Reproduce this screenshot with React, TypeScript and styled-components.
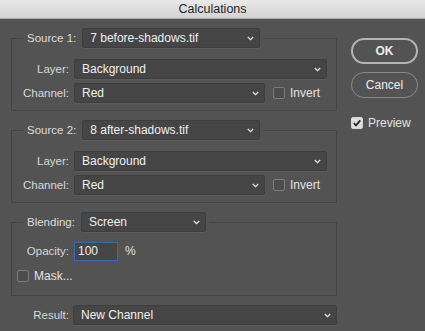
import React from "react";
import styled, { createGlobalStyle } from "styled-components";

const Global = createGlobalStyle`
  html, body { margin: 0; padding: 0; background: #535353; overflow: hidden; }
  * { box-sizing: border-box; }
`;

const Window = styled.div`
  width: 425px;
  height: 331px;
  background: #535353;
  font-family: "Liberation Sans", Arial, sans-serif;
  font-size: 11.5px;
  color: #dcdcdc;
  display: flex;
  flex-direction: column;
`;

const TitleBar = styled.div`
  height: 19px;
  flex: none;
  background: linear-gradient(#e9e9e9, #d3d3d3);
  border-bottom: 1px solid #a8a8a8;
  color: #262626;
  font-size: 12.5px;
  display: flex;
  align-items: center;
  justify-content: center;
`;

const Body = styled.div`
  display: flex;
  gap: 14px;
  padding: 9px 7px 0 11px;
`;

const Main = styled.div`
  width: 326px;
  display: flex;
  flex-direction: column;
`;

const Group = styled.fieldset<{ $pt?: number; $pb?: number }>`
  margin: 0 0 9px 0;
  padding: ${(p) => p.$pt ?? 11}px 0 ${(p) => p.$pb ?? 7}px 0;
  border: 1px solid #444444;
  min-inline-size: 0;
  display: flex;
  flex-direction: column;
  gap: 4px;
`;

const Legend = styled.legend`
  margin-left: 12px;
  padding: 0 3px;
  height: 20px;
`;

const LegendInner = styled.span`
  display: inline-flex;
  align-items: center;
  gap: 6px;
  height: 20px;
`;

const Row = styled.div`
  display: flex;
  align-items: center;
  height: 20px;
`;

const Label = styled.span<{ $w?: number; $gap?: number }>`
  width: ${(p) => p.$w ?? 57}px;
  text-align: right;
  margin-right: ${(p) => p.$gap ?? 5}px;
  white-space: nowrap;
  color: #d8d8d8;
`;

const SelectBox = styled.div<{ $w: number }>`
  width: ${(p) => p.$w}px;
  height: 20px;
  background: #454545;
  border: 1px solid #3e3e3e;
  border-radius: 2px;
  box-shadow: 0 1px 0 rgba(255, 255, 255, 0.05);
  display: flex;
  align-items: center;
  justify-content: space-between;
  padding: 0 5px 0 7px;
  color: #f0f0f0;
  font-size: 12px;
  white-space: nowrap;
`;

const Chevron = () => (
  <svg width="7" height="5" viewBox="0 0 7 5">
    <path d="M0.8 1 L3.5 3.7 L6.2 1" fill="none" stroke="#e6e6e6" strokeWidth="1.3" />
  </svg>
);

const Select = ({ w, value }: { w: number; value: string }) => (
  <SelectBox $w={w}>
    <span>{value}</span>
    <Chevron />
  </SelectBox>
);

const Box = styled.span<{ $checked?: boolean }>`
  width: 12px;
  height: 12px;
  flex: none;
  border-radius: 2px;
  border: 1px solid ${(p) => (p.$checked ? "#d6d6d6" : "#7c7c7c")};
  background: ${(p) => (p.$checked ? "#dedede" : "#4d4d4d")};
  display: inline-flex;
  align-items: center;
  justify-content: center;
`;

const Check = ({ checked }: { checked?: boolean }) => (
  <Box $checked={checked}>
    {checked && (
      <svg width="10" height="10" viewBox="0 0 10 10">
        <path d="M1.8 5.2 L4 7.4 L8.3 2.3" fill="none" stroke="#2b2b2b" strokeWidth="1.8" />
      </svg>
    )}
  </Box>
);

const CheckLabel = styled.label<{ $ml?: number }>`
  display: inline-flex;
  align-items: center;
  gap: 5px;
  margin-left: ${(p) => p.$ml ?? 0}px;
  color: #e2e2e2;
  font-size: 12px;
`;

const Input = styled.div`
  width: 44px;
  height: 19px;
  background: #454545;
  border: 1.5px solid #2f6db3;
  display: flex;
  align-items: center;
  padding-left: 3px;
  color: #f0f0f0;
  font-size: 12px;
`;

const Percent = styled.span`
  margin-left: 7px;
  color: #e0e0e0;
  font-size: 12px;
`;

const MaskRow = styled.div`
  display: flex;
  align-items: center;
  height: 14px;
  margin-top: 4px;
  padding-left: 5px;
`;

const ResultRow = styled.div`
  display: flex;
  align-items: center;
  height: 20px;
`;

const Side = styled.div`
  width: 67px;
  display: flex;
  flex-direction: column;
  padding-top: 10px;
`;

const Button = styled.div<{ $primary?: boolean }>`
  height: 26px;
  border-radius: 13px;
  border: ${(p) => (p.$primary ? "2px solid #b4b4b4" : "1px solid #8a8a8a")};
  display: flex;
  align-items: center;
  justify-content: center;
  color: #ececec;
  font-size: 12px;
  font-weight: ${(p) => (p.$primary ? 700 : 400)};
  margin-bottom: 8px;
`;

const PreviewRow = styled.div`
  margin-top: 10px;
`;

export default function App() {
  return (
    <Window>
      <Global />
      <TitleBar>Calculations</TitleBar>
      <Body>
        <Main>
          <Group>
            <Legend>
              <LegendInner>
                <span>Source 1:</span>
                <Select w={178} value="7 before-shadows.tif" />
              </LegendInner>
            </Legend>
            <Row>
              <Label>Layer:</Label>
              <Select w={253} value="Background" />
            </Row>
            <Row>
              <Label>Channel:</Label>
              <Select w={191} value="Red" />
              <CheckLabel $ml={8}>
                <Check />
                Invert
              </CheckLabel>
            </Row>
          </Group>
          <Group>
            <Legend>
              <LegendInner>
                <span>Source 2:</span>
                <Select w={178} value="8 after-shadows.tif" />
              </LegendInner>
            </Legend>
            <Row>
              <Label>Layer:</Label>
              <Select w={253} value="Background" />
            </Row>
            <Row>
              <Label>Channel:</Label>
              <Select w={191} value="Red" />
              <CheckLabel $ml={8}>
                <Check />
                Invert
              </CheckLabel>
            </Row>
          </Group>
          <Group $pt={9} $pb={12}>
            <Legend>
              <LegendInner>
                <span>Blending:</span>
                <Select w={125} value="Screen" />
              </LegendInner>
            </Legend>
            <Row>
              <Label>Opacity:</Label>
              <Input>100</Input>
              <Percent>%</Percent>
            </Row>
            <MaskRow>
              <CheckLabel>
                <Check />
                Mask...
              </CheckLabel>
            </MaskRow>
          </Group>
          <ResultRow>
            <Label $w={58} $gap={4}>Result:</Label>
            <Select w={264} value="New Channel" />
          </ResultRow>
        </Main>
        <Side>
          <Button $primary>OK</Button>
          <Button>Cancel</Button>
          <PreviewRow>
            <CheckLabel>
              <Check checked />
              Preview
            </CheckLabel>
          </PreviewRow>
        </Side>
      </Body>
    </Window>
  );
}
